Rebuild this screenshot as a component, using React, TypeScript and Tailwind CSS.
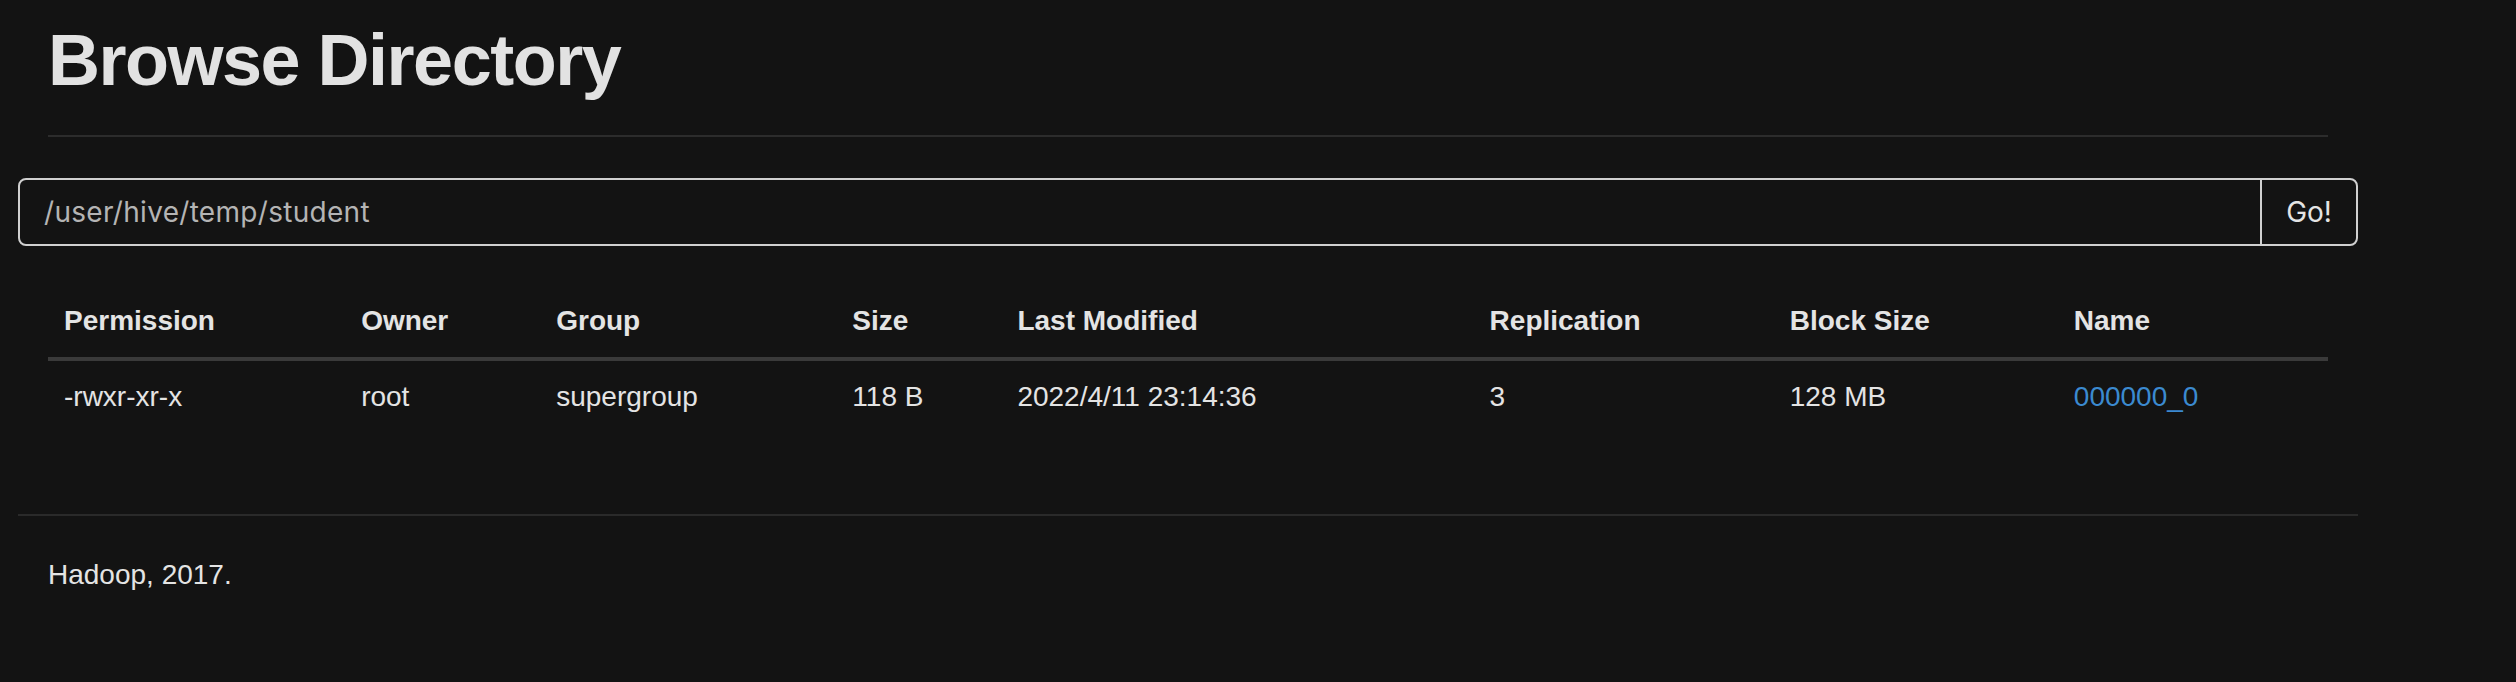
import React from "react";

const columns = [
  { label: "Permission", width: "w-[297px]" },
  { label: "Owner", width: "w-[195px]" },
  { label: "Group", width: "w-[296px]" },
  { label: "Size", width: "w-[165px]" },
  { label: "Last Modified", width: "w-[472px]" },
  { label: "Replication", width: "w-[300px]" },
  { label: "Block Size", width: "w-[284px]" },
  { label: "Name", width: "w-[270px]" },
];

const row = ["-rwxr-xr-x", "root", "supergroup", "118 B", "2022/4/11 23:14:36", "3", "128 MB"];

export default function App() {
  return (
    <div className="min-h-[682px] w-full bg-[#131313] font-['Liberation_Sans',Arial,sans-serif] text-[#e4e4e4]">
      <div className="ml-[18px] w-[2340px] px-[30px] pt-[20px]">
        {/* page header */}
        <div className="border-b-2 border-[#2c2c2c] pb-[35px]">
          <h1 className="text-[72px] font-bold leading-[80px] tracking-[-1.5px] text-[#e2e2e2]">Browse Directory</h1>
        </div>

        {/* path input */}
        <div className="-mx-[30px] mt-[41px] flex h-[68px] rounded-[8px] border-2 border-[#d0d0d0]">
          <input
            type="text"
            defaultValue="/user/hive/temp/student"
            className="min-w-0 flex-1 bg-transparent px-[24px] font-['Inter',sans-serif] text-[28px] tracking-[0.3px] text-[#b4b4b4] outline-none"
          />
          <button className="w-[96px] border-l-2 border-[#d0d0d0] font-['Inter',sans-serif] text-[28px] text-[#e4e4e4]">
            Go!
          </button>
        </div>

        {/* listing */}
        <table className="mt-[39px] w-[2280px] table-fixed border-collapse text-left text-[28px] leading-[40px]">
          <thead>
            <tr className="border-b-4 border-[#3a3a3a]">
              {columns.map((c) => (
                <th key={c.label} className={`${c.width} px-[16px] py-[16px] font-bold`}>
                  {c.label}
                </th>
              ))}
            </tr>
          </thead>
          <tbody>
            <tr>
              {row.map((v, i) => (
                <td key={i} className="px-[16px] py-[16px]">
                  {v}
                </td>
              ))}
              <td className="px-[16px] py-[16px]">
                <a href="#" className="text-[#3b8ad0]">
                  000000_0
                </a>
              </td>
            </tr>
          </tbody>
        </table>

        {/* footer */}
        <div className="-mx-[30px] mt-[81px] border-t-2 border-[#2a2a2a] px-[30px] pt-[39px]">
          <p className="text-[28px] leading-[40px]">Hadoop, 2017.</p>
        </div>
      </div>
    </div>
  );
}
